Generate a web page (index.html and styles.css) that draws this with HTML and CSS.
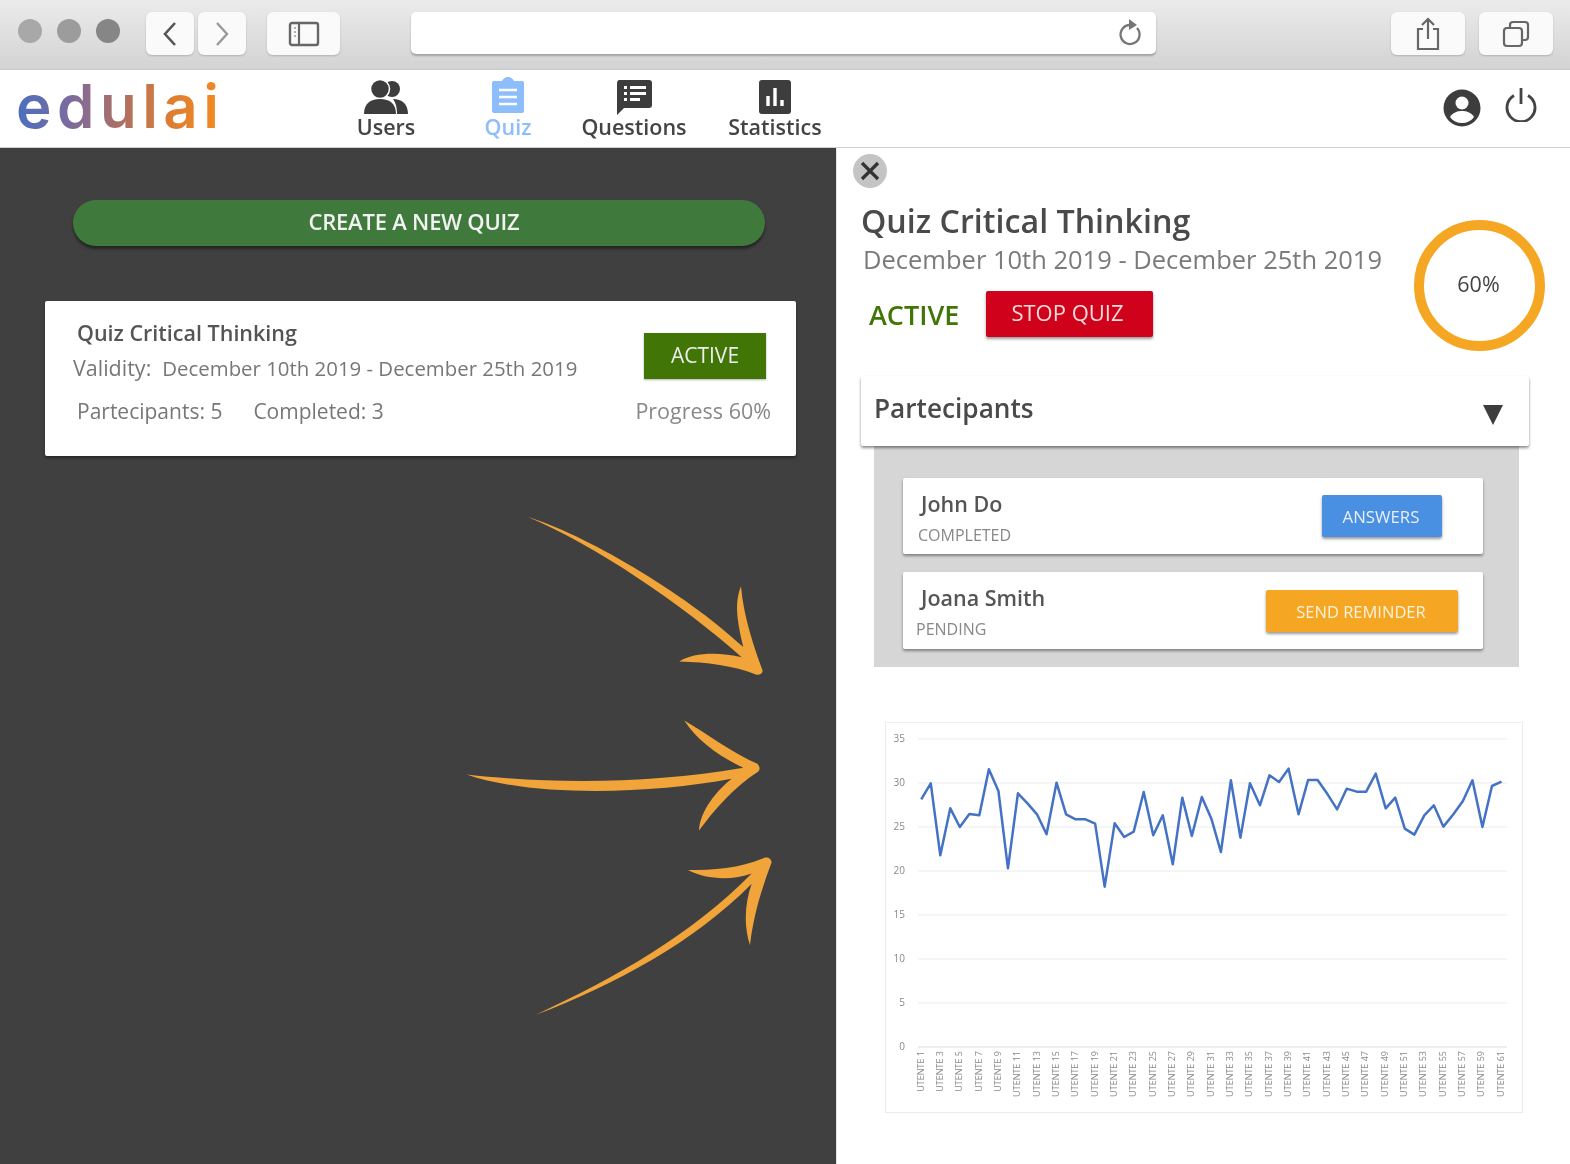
FILE: index.html
```html
<!DOCTYPE html>
<html lang="en">
<head>
<meta charset="utf-8">
<title>edulai</title>
<link rel="stylesheet" href="styles.css">
</head>
<body>
<header class="browser soft">
  <div class="lights"><i class="light l1"></i><i class="light l2"></i><i class="light l3"></i></div>
  <div class="tool tool-nav"><svg width="20" height="28" viewBox="0 0 20 28"><path d="M15 3 5 14l10 11" fill="none" stroke="#555" stroke-width="2.6"/></svg></div>
  <div class="tool tool-nav fwd"><svg width="20" height="28" viewBox="0 0 20 28"><path d="m5 3 10 11L5 25" fill="none" stroke="#999" stroke-width="2.4"/></svg></div>
  <div class="tool tool-side"><svg width="32" height="26" viewBox="0 0 32 26"><rect x="2" y="2" width="28" height="22" rx="2" fill="none" stroke="#666" stroke-width="2.4"/><path d="M11 2v22" stroke="#666" stroke-width="2.2"/><path d="M6 7h2M6 11h2M6 15h2" stroke="#999" stroke-width="1.5"/></svg></div>
  <div class="url"><svg width="28" height="32" viewBox="0 0 28 32"><path d="M21 11a9.500 9.500 0 1 1-7-3" fill="none" stroke="#777" stroke-width="2.300"/><path d="m13 2 8 6-8 5z" fill="#777"/></svg></div>
  <div class="tool tool-share"><svg width="26" height="34" viewBox="0 0 26 34"><path d="M8 12H3v20h20V12h-5" fill="none" stroke="#666" stroke-width="2.200"/><path d="M13 22V3M7 8l6-6 6 6" fill="none" stroke="#666" stroke-width="2.200"/></svg></div>
  <div class="tool tool-tabs"><svg width="28" height="28" viewBox="0 0 28 28"><rect x="2" y="8" width="18" height="18" rx="3" fill="none" stroke="#666" stroke-width="2.200"/><path d="M8 8V5a3 3 0 0 1 3-3h12a3 3 0 0 1 3 3v12a3 3 0 0 1-3 3h-3" fill="none" stroke="#666" stroke-width="2.200"/></svg></div>
</header>

<nav class="nav soft">
  <div class="logo">edulai</div>
  <ul class="menu">
    <li class="item item-users">
      <svg width="46" height="36" viewBox="0 0 46 36"><circle cx="29" cy="10" r="8" fill="#3d3d3d"/><path d="M30 20c9 0 15 5 15 15H34c0-6-1-11-4-15z" fill="#3d3d3d"/><circle cx="17" cy="10" r="9.500" fill="#3d3d3d" stroke="#fff" stroke-width="1.500"/><path d="M1 35c0-10 6-15 16-15s16 5 16 15z" fill="#3d3d3d"/></svg>
      <span>Users</span>
    </li>
    <li class="item item-quiz">
      <svg width="36" height="36" viewBox="0 0 36 36"><path d="M4 4h8c1-2 3-4 6-4s5 2 6 4h8a2 2 0 0 1 2 2v28a2 2 0 0 1-2 2H4a2 2 0 0 1-2-2V6a2 2 0 0 1 2-2z" fill="#8dbdfb"/><path d="M9 13h18M9 20h18M9 27h18" stroke="#fff" stroke-width="2.600"/></svg>
      <span>Quiz</span>
    </li>
    <li class="item item-questions">
      <svg width="38" height="36" viewBox="0 0 38 36"><path d="M4 1h30a3 3 0 0 1 3 3v22a3 3 0 0 1-3 3H9l-7 7V4a3 3 0 0 1 2-3z" fill="#3d3d3d"/><path d="M9 7h3v3H9zM9 13h3v3H9zM9 19h3v3H9zM15 7h16v3H15zM15 13h16v3H15zM15 19h10v3H15z" fill="#fff"/></svg>
      <span>Questions</span>
    </li>
    <li class="item item-stats">
      <svg width="34" height="36" viewBox="0 0 34 36"><rect x="1" y="1" width="32" height="34" rx="3" fill="#3d3d3d"/><path d="M10 27V17M17 27V9M24 27v-6" stroke="#fff" stroke-width="3.400"/></svg>
      <span>Statistics</span>
    </li>
  </ul>
  <div class="account">
    <svg width="38" height="38" viewBox="0 0 38 38"><circle cx="19" cy="19" r="18.500" fill="#3d3d3d"/><circle cx="19" cy="14" r="6.500" fill="#fff"/><path d="M7 28c3-5 8-6 12-6s9 1 12 6c-3 4-7 6-12 6s-9-2-12-6z" fill="#fff"/></svg>
    <svg class="power" width="36" height="36" viewBox="0 0 36 36"><path d="M11 9.500a14 14 0 1 0 14 0" fill="none" stroke="#444" stroke-width="2.800"/><path d="M18 2v16" stroke="#444" stroke-width="2.800"/></svg>
  </div>
</nav>

<main class="main">
  <section class="left">
    <div class="left-in soft">
      <button class="create">CREATE A NEW QUIZ</button>
      <article class="card">
        <div class="card-main">
          <h3 class="card-title">Quiz Critical Thinking</h3>
          <p class="card-valid"><span class="valid-label">Validity:</span><span>December 10th 2019 - December 25th 2019</span></p>
          <p class="card-stats"><span>Partecipants: 5</span><span>Completed: 3</span></p>
        </div>
        <div class="card-side">
          <span class="badge">ACTIVE</span>
          <span class="progress">Progress 60%</span>
        </div>
      </article>
    </div>
    <svg class="arrows" width="340" height="530" viewBox="0 0 1020 1568" preserveAspectRatio="none">
      <path d="M234 50C400 100 700 270 880 435 865 370 850 310 873 255 880 340 910 430 938 505Q936 518 920 517C850 490 770 480 688 478 730 450 810 450 875 465 700 310 430 130 234 50z"/>
      <path d="M50 812C300 840 600 840 880 792 810 760 740 710 703 652 770 690 850 750 922 780Q934 792 925 803C850 850 790 920 747 978 750 920 800 860 845 825 600 870 250 880 50 812z"/>
      <path d="M258 1523C500 1410 720 1290 905 1105 850 1125 770 1125 714 1095 790 1095 870 1090 945 1058Q962 1056 965 1072C935 1150 910 1230 900 1317 880 1260 885 1190 905 1135 730 1310 500 1430 258 1523z"/>
    </svg>
  </section>

  <section class="right soft">
    <div class="close"><svg width="22" height="22" viewBox="0 0 22 22"><path d="M3 3l16 16M19 3 3 19" stroke="#333" stroke-width="3.200"/></svg></div>
    <div class="head">
      <div class="head-text">
        <h1 class="title">Quiz Critical Thinking</h1>
        <p class="dates">December 10th 2019 - December 25th 2019</p>
        <div class="status"><span class="active">ACTIVE</span><button class="stop">STOP QUIZ</button></div>
      </div>
      <div class="ring"><span class="ring-val">60%</span></div>
    </div>

    <div class="acc-head"><span>Partecipants</span><i class="tri"></i></div>
    <div class="acc-body">
      <div class="row">
        <div class="who"><strong>John Do</strong><small>COMPLETED</small></div>
        <button class="act act-blue">ANSWERS</button>
      </div>
      <div class="row row-2">
        <div class="who"><strong>Joana Smith</strong><small>PENDING</small></div>
        <button class="act act-orange">SEND REMINDER</button>
      </div>
    </div>

    <div class="chart">
      <svg width="638" height="390" viewBox="0 0 638 390">
        <g class="grid">
          <path d="M32 16h589M32 60h589M32 104h589M32 148h589M32 192h589M32 236h589M32 280h589"/>
          <path class="axis" d="M32 324h589"/>
        </g>
        <g class="ylab">
          <text x="19" y="19">35</text><text x="19" y="63">30</text><text x="19" y="107">25</text><text x="19" y="151">20</text><text x="19" y="195">15</text><text x="19" y="239">10</text><text x="19" y="283">5</text><text x="19" y="327">0</text>
        </g>
        <polyline class="line" transform="translate(-25.500 -2) scale(.4337 .3333)" vector-effect="non-scaling-stroke" points="140,235 162,187 184,403 207,262 229,318 251,279 274,283 296,145 318,210 340,442 363,217 385,247 407,280 429,340 452,185 474,280 496,295 519,295 541,308 563,497 586,307 608,348 630,332 653,213 675,343 697,283 720,430 742,230 764,345 787,228 809,293 831,393 854,178 876,350 898,187 921,253 943,163 965,183 987,143 1010,280 1032,177 1054,177 1077,220 1099,265 1121,203 1144,212 1166,212 1188,158 1211,262 1233,230 1255,323 1277,341 1300,283 1322,253 1344,317 1367,280 1389,240 1411,178 1434,318 1456,195 1478,182"/>
        <g class="xlab">
          <text transform="translate(38 328) rotate(-90)">UTENTE 1</text>
          <text transform="translate(57 328) rotate(-90)">UTENTE 3</text>
          <text transform="translate(76 328) rotate(-90)">UTENTE 5</text>
          <text transform="translate(96 328) rotate(-90)">UTENTE 7</text>
          <text transform="translate(115 328) rotate(-90)">UTENTE 9</text>
          <text transform="translate(134 328) rotate(-90)">UTENTE 11</text>
          <text transform="translate(154 328) rotate(-90)">UTENTE 13</text>
          <text transform="translate(173 328) rotate(-90)">UTENTE 15</text>
          <text transform="translate(192 328) rotate(-90)">UTENTE 17</text>
          <text transform="translate(212 328) rotate(-90)">UTENTE 19</text>
          <text transform="translate(231 328) rotate(-90)">UTENTE 21</text>
          <text transform="translate(250 328) rotate(-90)">UTENTE 23</text>
          <text transform="translate(270 328) rotate(-90)">UTENTE 25</text>
          <text transform="translate(289 328) rotate(-90)">UTENTE 27</text>
          <text transform="translate(308 328) rotate(-90)">UTENTE 29</text>
          <text transform="translate(328 328) rotate(-90)">UTENTE 31</text>
          <text transform="translate(347 328) rotate(-90)">UTENTE 33</text>
          <text transform="translate(366 328) rotate(-90)">UTENTE 35</text>
          <text transform="translate(386 328) rotate(-90)">UTENTE 37</text>
          <text transform="translate(405 328) rotate(-90)">UTENTE 39</text>
          <text transform="translate(424 328) rotate(-90)">UTENTE 41</text>
          <text transform="translate(444 328) rotate(-90)">UTENTE 43</text>
          <text transform="translate(463 328) rotate(-90)">UTENTE 45</text>
          <text transform="translate(482 328) rotate(-90)">UTENTE 47</text>
          <text transform="translate(502 328) rotate(-90)">UTENTE 49</text>
          <text transform="translate(521 328) rotate(-90)">UTENTE 51</text>
          <text transform="translate(540 328) rotate(-90)">UTENTE 53</text>
          <text transform="translate(560 328) rotate(-90)">UTENTE 55</text>
          <text transform="translate(579 328) rotate(-90)">UTENTE 57</text>
          <text transform="translate(598 328) rotate(-90)">UTENTE 59</text>
          <text transform="translate(618 328) rotate(-90)">UTENTE 61</text>
        </g>
      </svg>
    </div>
  </section>
</main>
</body>
</html>
```

FILE: styles.css
```css
* { box-sizing: border-box; }
html, body { margin: 0; padding: 0; }
body {
  width: 1570px;
  height: 1164px;
  overflow: hidden;
  display: flex;
  flex-direction: column;
  font-family: "Open Sans", "Noto Sans", sans-serif;
  color: #444;
  background: #fff;
}
h1, h3, p, ul { margin: 0; padding: 0; }
button { font-family: inherit; border: 0; padding: 0; }
.soft { filter: blur(.7px); }

/* browser chrome */
.browser {
  height: 70px;
  flex: none;
  display: flex;
  align-items: flex-start;
  padding-top: 12px;
  background: linear-gradient(#ebebeb, #d3d3d3);
  border-bottom: 1px solid #c9c9c9;
}
.lights { display: flex; gap: 15px; margin: 7px 26px 0 18px; }
.light { width: 24px; height: 24px; border-radius: 50%; }
.l1 { background: #a8a8a8; }
.l2 { background: #9c9c9c; }
.l3 { background: #868686; }
.tool {
  height: 43px;
  display: flex;
  align-items: center;
  justify-content: center;
  background: #fafafa;
  border-radius: 6px;
  box-shadow: 0 1px 2px rgba(0,0,0,.18);
}
.tool-nav { width: 48px; }
.fwd { margin-left: 4px; }
.tool-side { width: 73px; margin-left: 21px; }
.url {
  width: 745px;
  height: 42px;
  margin-left: 71px;
  display: flex;
  align-items: center;
  justify-content: flex-end;
  padding-right: 12px;
  background: #fff;
  border-radius: 5px;
  box-shadow: 0 2px 2px rgba(0,0,0,.25);
}
.tool-share { width: 74px; margin-left: 235px; }
.tool-tabs { width: 74px; margin-left: 14px; }

/* app nav */
.nav {
  height: 78px;
  flex: none;
  display: flex;
  position: relative;
  background: #fff;
  border-bottom: 1px solid #cfcfcf;
}
.logo {
  width: 340px;
  padding: 0 0 0 16px;
  font-family: Inter, sans-serif;
  font-size: 60px;
  line-height: 72px;
  font-weight: 600;
  letter-spacing: 5.500px;
  color: transparent;
  background: linear-gradient(90deg, #4a6fc0 16px, #7d6a9e 70px, #b0705f 125px, #e07f2f 175px, #f08a24 220px);
  background-clip: text;
  -webkit-background-clip: text;
}
.menu { display: flex; list-style: none; width: 500px; }
.item {
  display: flex;
  flex-direction: column;
  align-items: center;
  height: 76px;
  padding-top: 9px;
  font-size: 21.500px;
  line-height: 24px;
  font-weight: 600;
  color: #444;
}
.item svg { flex: none; margin-bottom: 0; }
.item-users { width: 90px; margin-left: 1px; }
.item-quiz { width: 90px; margin-left: 32px; padding-top: 7px; color: #8dbdfb; }
.item-quiz span { margin-top: 2px; }
.item-questions { width: 120px; margin-left: 21px; }
.item-stats { width: 120px; margin-left: 21px; }
.account { display: flex; margin-left: auto; margin-right: 31px; padding-top: 19px; gap: 22px; }
.power { margin-top: -3px; }

/* main */
.main { flex: 1; display: flex; min-height: 0; }
.left { width: 836px; flex: none; position: relative; background: #404040; }
.left-in { padding: 52px 0 0 45px; }
.arrows { position: absolute; left: 450px; top: 352px; }
.arrows path { fill: #f0a43a; }

.create {
  display: block;
  width: 692px;
  height: 46px;
  margin-left: 28px;
  padding: 0 10px 4px 0;
  border-radius: 23px;
  background: #3f7a3c;
  color: #f2f2f2;
  font-size: 22px;
  font-weight: 600;
  letter-spacing: -.2px;
  box-shadow: 0 3px 3px rgba(0,0,0,.45);
}
.card {
  width: 751px;
  height: 155px;
  margin-top: 55px;
  display: flex;
  justify-content: space-between;
  padding: 18px 25px 0 28px;
  background: #fff;
  border-radius: 2px;
  box-shadow: 0 2px 3px rgba(0,0,0,.4);
}
.card-title { padding-left: 4px; font-size: 21.500px; line-height: 28px; font-weight: 600; color: #555; }
.card-valid { display: flex; gap: 11px; margin-top: 7px; font-size: 20.400px; line-height: 28px; color: #777; }
.valid-label { font-size: 21.500px; }
.card-stats { display: flex; gap: 31px; margin-top: 15px; padding-left: 4px; font-size: 21px; line-height: 28px; color: #777; }
.card-side { display: flex; flex-direction: column; align-items: flex-end; }
.badge {
  width: 122px;
  height: 46px;
  margin: 14px 5px 0 0;
  padding-bottom: 2px;
  display: flex;
  align-items: center;
  justify-content: center;
  background: #417505;
  color: #eee;
  font-size: 21px;
  box-shadow: 0 1px 2px rgba(0,0,0,.3);
}
.progress { margin-top: 18px; font-size: 21.500px; line-height: 28px; color: #888; }

/* right */
.right { flex: 1; min-width: 0; padding: 6px 0 0 17px; background: #fff; border-left: 1px solid #e5e5e5; }
.close {
  width: 34px;
  height: 34px;
  margin-left: -1px;
  display: flex;
  align-items: center;
  justify-content: center;
  border-radius: 50%;
  background: #c4c4c4;
}
.head { display: flex; justify-content: space-between; margin-top: 12px; }
.head-text { padding-left: 7px; }
.title { font-size: 32.200px; line-height: 42px; font-weight: 600; color: #4a4a4a; }
.dates { margin-top: -1px; padding-left: 2px; font-size: 25.500px; line-height: 36px; color: #7b7b7b; }
.status { display: flex; align-items: flex-start; margin-top: 14px; padding-left: 8px; }
.active { margin-top: 6px; width: 116px; font-size: 27px; line-height: 36px; font-weight: 600; color: #417505; }
.stop {
  width: 167px;
  height: 46px;
  margin-left: 1px;
  padding: 0 4px 4px 0;
  background: #d0021b;
  color: #f5dcdc;
  font-size: 22px;
  border-radius: 2px;
  box-shadow: 0 2px 3px rgba(0,0,0,.4);
}
.ring {
  width: 131px;
  height: 131px;
  margin: 20px 25px 0 0;
  flex: none;
  display: flex;
  align-items: center;
  justify-content: center;
  border: 10px solid #f5a623;
  border-radius: 50%;
  font-size: 21.500px;
  color: #444;
}
.ring-val { margin: 0 2px 4px 0; }
.acc-head {
  width: 668px;
  height: 70px;
  margin-top: 25px;
  margin-left: 7px;
  position: relative;
  z-index: 1;
  display: flex;
  align-items: center;
  justify-content: space-between;
  padding: 0 26px 6px 13px;
  background: #fff;
  border-radius: 2px;
  box-shadow: 0 2px 3px rgba(0,0,0,.45);
  font-size: 26.200px;
  font-weight: 600;
  color: #4a4a4a;
}
.tri {
  width: 0;
  height: 0;
  margin-top: 14px;
  border-left: 10px solid transparent;
  border-right: 10px solid transparent;
  border-top: 20px solid #3d3d3d;
}
.acc-body {
  width: 645px;
  height: 221px;
  margin-left: 20px;
  padding: 32px 0 0 29px;
  background: #d6d6d6;
}
.row {
  width: 580px;
  height: 76px;
  display: flex;
  align-items: flex-start;
  justify-content: space-between;
  background: #fff;
  box-shadow: 0 2px 3px rgba(0,0,0,.4);
  border-radius: 2px;
}
.row-2 { margin-top: 18px; height: 77px; }
.who { display: flex; flex-direction: column; padding: 11px 0 0 15px; }
.row-2 .who { padding-left: 13px; }
.who strong { padding-left: 3px; font-size: 21.500px; line-height: 30px; font-weight: 600; color: #555; }
.who small { margin-top: 5px; font-size: 16px; line-height: 22px; color: #888; }
.row-2 strong { padding-left: 5px; }
.act { height: 42px; margin-top: 17px; padding-right: 2px; color: #e8eef8; font-size: 16.800px; border-radius: 2px; box-shadow: 0 2px 3px rgba(0,0,0,.4); }
.act-blue { width: 120px; margin-right: 41px; background: #4a90e2; }
.act-orange { width: 192px; margin-top: 18px; margin-right: 25px; background: #f5a623; color: #fdf3dd; font-size: 16.500px; }

.chart {
  width: 638px;
  height: 391px;
  margin: 55px 0 0 31px;
  border: 1px solid #ececec;
  filter: blur(.4px);
}
.chart svg { display: block; }
.grid path { fill: none; stroke: #ebebeb; stroke-width: 1.200; }
.grid .axis { stroke: #ddd; }
.ylab text { font-size: 10px; fill: #888; text-anchor: end; }
.xlab text { font-size: 9px; fill: #888; text-anchor: end; }
.line { fill: none; stroke: #4472c4; stroke-width: 2.500px; stroke-linejoin: round; }
```
